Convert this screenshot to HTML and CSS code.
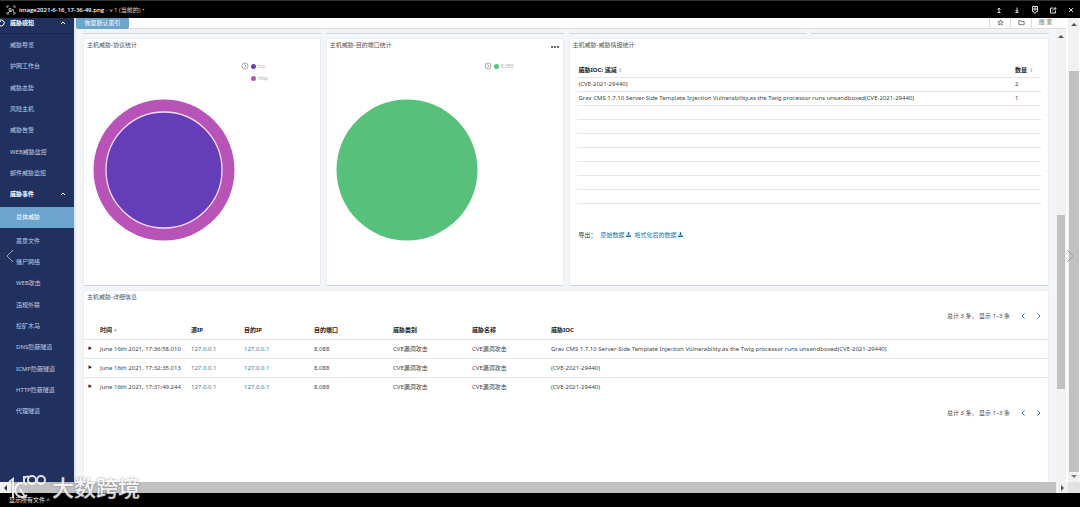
FILE: index.html
```html
<!DOCTYPE html>
<html lang="zh-CN">
<head>
<meta charset="utf-8">
<title>威胁事件 - 总体威胁</title>
<link rel="stylesheet" href="styles.css">
</head>
<body>
<header class="topbar">
  <svg class="file-icon" viewBox="0 0 10 10"><path d="M1 3V1h2M7 1h2v2M9 7v2H7M3 9H1V7M3 3.500h2v2H3zM2 8l2-2 1 1 2-3 1 4"/></svg>
  <span class="file-name">image2021-6-16_17-36-49.png</span>
  <span class="file-version">- v 1 (当前的) •</span>
  <nav class="top-actions">
    <button aria-label="上传"><svg viewBox="0 0 8 8"><path d="M4 6V2M2.500 3.500L4 2l1.500 1.500M2.500 6.500h3"/></svg></button>
    <button aria-label="下载"><svg viewBox="0 0 8 8"><path d="M4 1.500v4M2.500 4L4 5.500 5.500 4M2.500 6.500h3"/></svg></button>
    <button aria-label="评论"><svg viewBox="0 0 8 8"><path d="M1.500 .5h5v5h-1L4 7.500 2.500 5.500h-1zM3 2h2v2H3z"/></svg></button>
    <button aria-label="分享"><svg viewBox="0 0 8 8"><path d="M4 2H1.500v5h5V4.500M3.500 4.500C4 3 5 2.500 7 2.500M5.500 1L7 2.500 5.500 4"/></svg></button>
    <button aria-label="关闭"><svg viewBox="0 0 8 8"><path d="M2 2l4 4M6 2L2 6"/></svg></button>
  </nav>
</header>

<main class="viewer">
  <aside class="sidebar">
    <ul class="menu">
      <li class="group"><svg class="radar" viewBox="0 0 8 8"><path d="M1 2a3 3 0 1 1 0 4M1 .5V2.500h2"/></svg><a href="#">威胁感知</a><svg class="caret" viewBox="0 0 6 6"><path d="M1 4l2-2 2 2"/></svg></li>
      <li><a href="#">威胁导览</a></li>
      <li><a href="#">护网工作台</a></li>
      <li><a href="#">威胁态势</a></li>
      <li><a href="#">风险主机</a></li>
      <li><a href="#">威胁告警</a></li>
      <li><a href="#">WEB威胁监控</a></li>
      <li><a href="#">邮件威胁监控</a></li>
      <li class="group"><a href="#">威胁事件</a><svg class="caret" viewBox="0 0 6 6"><path d="M1 4l2-2 2 2"/></svg></li>
      <li class="sub active"><a href="#">总体威胁</a></li>
      <li class="sub"><a href="#">恶意文件</a></li>
      <li class="sub"><a href="#">僵尸网络</a></li>
      <li class="sub"><a href="#">WEB攻击</a></li>
      <li class="sub"><a href="#">违规外联</a></li>
      <li class="sub"><a href="#">挖矿木马</a></li>
      <li class="sub"><a href="#">DNS隐蔽隧道</a></li>
      <li class="sub"><a href="#">ICMP隐蔽隧道</a></li>
      <li class="sub"><a href="#">HTTP隐蔽隧道</a></li>
      <li class="sub"><a href="#">代理隧道</a></li>
    </ul>
  </aside>

  <section class="content">
    <div class="toolbar">
      <button class="primary">恢复默认索引</button>
      <div class="tools">
        <button aria-label="收藏"><svg viewBox="0 0 8 8"><path d="M4 1l.9 2 2.100.2-1.600 1.500.5 2.200L4 5.800 2.100 6.900l.5-2.200L1 3.200 3.100 3z"/></svg></button>
        <button aria-label="打开"><svg viewBox="0 0 8 8"><path d="M1 2h2.500l.7 1H7v3.500H1z"/></svg></button>
        <button class="search">搜 索</button>
      </div>
    </div>
    <div class="scroller">
      <div class="dashboard">
        <div class="stub"></div><div class="stub"></div><div class="stub"></div><div class="stub"></div>

        <article class="panel">
          <h2>主机威胁-协议统计</h2>
          <div class="chart">
            <svg class="pie" viewBox="0 0 142 142"><circle cx="71" cy="71" r="70.500" fill="#b853b8"/><circle cx="71" cy="71" r="58" fill="#663db8" stroke="#f3dcfa" stroke-width="1.300"/></svg>
            <div class="legend">
              <svg class="toggle" viewBox="0 0 8 8"><circle cx="4" cy="4" r="3"/><path d="M3.400 2.500L5 4 3.400 5.500"/></svg>
              <ul><li><i class="dot violet"></i>tcp</li><li><i class="dot pink"></i>http</li></ul>
            </div>
          </div>
        </article>

        <article class="panel">
          <h2>主机威胁-目的端口统计</h2>
          <button class="more" aria-label="选项"><i></i><i></i><i></i></button>
          <div class="chart">
            <svg class="pie" viewBox="0 0 142 142"><circle cx="71" cy="71" r="70.500" fill="#57c17b"/></svg>
            <div class="legend">
              <svg class="toggle" viewBox="0 0 8 8"><circle cx="4" cy="4" r="3"/><path d="M3.400 2.500L5 4 3.400 5.500"/></svg>
              <ul><li><i class="dot green"></i>8,088</li></ul>
            </div>
          </div>
        </article>

        <article class="panel wide">
          <h2>主机威胁-威胁情报统计</h2>
          <table class="summary">
            <thead><tr><th>威胁IOC: 递减 <span class="sort">⇕</span></th><th class="count">数量 <span class="sort">⇕</span></th></tr></thead>
            <tbody>
              <tr><td>(CVE-2021-29440)</td><td>2</td></tr>
              <tr><td>Grav CMS 1.7.10 Server-Side Template Injection Vulnerability,as the Twig processor runs unsandboxed(CVE-2021-29440)</td><td>1</td></tr>
              <tr><td></td><td></td></tr><tr><td></td><td></td></tr><tr><td></td><td></td></tr><tr><td></td><td></td></tr><tr><td></td><td></td></tr><tr><td></td><td></td></tr><tr><td></td><td></td></tr>
            </tbody>
          </table>
          <p class="export"><span>导出：</span><a href="#">原始数据<svg viewBox="0 0 6 6"><path d="M2.300 0h1.400v2H5L3 4 1 2h1.300zM0 4.300h6V6H0z"/></svg></a><a href="#">格式化后的数据<svg viewBox="0 0 6 6"><path d="M2.300 0h1.400v2H5L3 4 1 2h1.300zM0 4.300h6V6H0z"/></svg></a></p>
        </article>

        <article class="panel full">
          <h2>主机威胁-详细信息</h2>
          <div class="pager"><span>总计 3 条， 显示 1–3 条</span><button aria-label="上一页"><svg viewBox="0 0 6 8"><path d="M4.500 1.500L2 4l2.500 2.500"/></svg></button><button aria-label="下一页"><svg viewBox="0 0 6 8"><path d="M1.500 1.500L4 4 1.500 6.500"/></svg></button></div>
          <table class="detail">
            <colgroup><col class="c-open"><col class="c-time"><col class="c-src"><col class="c-dst"><col class="c-std"><col class="c-std"><col class="c-std"><col></colgroup>
            <thead><tr><th></th><th>时间 <span class="sort">▾</span></th><th>源IP</th><th>目的IP</th><th>目的端口</th><th>威胁类别</th><th>威胁名称</th><th>威胁IOC</th></tr></thead>
            <tbody>
              <tr><td class="open">▶</td><td>June 16th 2021, 17:36:58.010</td><td><a href="#">127.0.0.1</a></td><td><a href="#">127.0.0.1</a></td><td>8,088</td><td>CVE漏洞攻击</td><td>CVE漏洞攻击</td><td>Grav CMS 1.7.10 Server-Side Template Injection Vulnerability,as the Twig processor runs unsandboxed(CVE-2021-29440)</td></tr>
              <tr><td class="open">▶</td><td>June 16th 2021, 17:32:35.013</td><td><a href="#">127.0.0.1</a></td><td><a href="#">127.0.0.1</a></td><td>8,088</td><td>CVE漏洞攻击</td><td>CVE漏洞攻击</td><td>(CVE-2021-29440)</td></tr>
              <tr><td class="open">▶</td><td>June 16th 2021, 17:31:49.244</td><td><a href="#">127.0.0.1</a></td><td><a href="#">127.0.0.1</a></td><td>8,088</td><td>CVE漏洞攻击</td><td>CVE漏洞攻击</td><td>(CVE-2021-29440)</td></tr>
            </tbody>
          </table>
          <div class="pager bottom"><span>总计 3 条， 显示 1–3 条</span><button aria-label="上一页"><svg viewBox="0 0 6 8"><path d="M4.500 1.500L2 4l2.500 2.500"/></svg></button><button aria-label="下一页"><svg viewBox="0 0 6 8"><path d="M1.500 1.500L4 4 1.500 6.500"/></svg></button></div>
        </article>
      </div>
      <div class="vbar inner"><i class="up"></i><b></b></div>
    </div>
  </section>

  <div class="vbar outer"><i class="up"></i><b></b><i class="down"></i></div>
  <button class="step prev" aria-label="上一张"><svg viewBox="0 0 8 14"><path d="M7 1L1 7l6 6"/></svg></button>
  <button class="step next" aria-label="下一张"><svg viewBox="0 0 8 14"><path d="M1 1l6 6-6 6"/></svg></button>
</main>

<div class="hbar"><i class="left"></i><b></b><i class="right"></i><span></span></div>
<footer class="bottombar"><button>显示所有文件 ^</button></footer>

<div class="watermark">
  <svg viewBox="0 0 38 28"><path d="M1 9l4-3v19"/><path d="M19 12a7 7 0 1 0 0 10M12 16l6 9"/><path d="M16 11V3M16 6c1-2 3-3 5-2"/><circle cx="24" cy="7" r="4"/><circle cx="33" cy="7" r="4"/></svg>
  <span>大数跨境</span>
</div>
</body>
</html>
```

FILE: styles.css
```css
* { box-sizing: border-box; }
body {
  margin: 0;
  height: 100vh;
  display: flex;
  flex-direction: column;
  overflow: hidden;
  background: #000;
  color: #444;
  font: 6px/8px "Noto Sans", "Noto Sans CJK SC", sans-serif;
}
button { border: 0; padding: 0; margin: 0; background: none; color: inherit; font: inherit; display: flex; align-items: center; justify-content: center; }
a { color: inherit; text-decoration: none; }
ul { list-style: none; margin: 0; padding: 0; }
svg { fill: none; stroke: currentColor; flex: none; display: block; }

.topbar { flex: none; height: 18px; padding: 0 4px 0 6px; display: flex; align-items: center; color: #ddd; border-top: 1px solid #333; font-family: "Open Sans", "Noto Sans CJK SC", sans-serif; }
.file-icon { width: 10px; height: 10px; margin-right: 3px; stroke-width: 1; color: #aaa; }
.file-name { font-weight: 600; color: #fff; }
.file-version { margin-left: 2px; }
.top-actions { margin-left: auto; display: flex; gap: 8px; }
.top-actions button { width: 10px; height: 10px; }
.top-actions svg { width: 8px; height: 8px; }

.viewer { flex: 1; min-height: 0; display: flex; position: relative; background: #fff; }
.sidebar { flex: none; width: 74px; display: flex; background: #20315f; color: #c3cbe0; overflow: hidden; }
.menu { flex: 1; display: flex; flex-direction: column; margin-top: -6px; padding-bottom: 60px; }
.menu li { flex: 1; display: flex; align-items: center; padding-left: 10px; white-space: nowrap; }
.menu .group { color: #fff; font-weight: 700; position: relative; }
.menu .group:first-child { border-bottom: 1px solid #1a2850; }
.menu .sub { padding-left: 16px; }
.menu .active { background: #6ba4cd; background-clip: padding-box; color: #fff; border: solid transparent; border-width: 2px 0; }
.caret { width: 6px; height: 6px; margin: 0 8px 0 auto; }
.radar { width: 8px; height: 8px; position: absolute; left: -2px; }

.content { flex: 1; min-width: 0; display: flex; flex-direction: column; background: #f3f5f8; border-left: 2px solid #e4e7ee; }
.toolbar { flex: none; height: 11px; display: flex; justify-content: space-between; background: #fff; border-bottom: 1px solid #ddd; }
.primary { width: 53px; height: 11px; padding-bottom: 2px; background: #6ba4cd; color: #fff; border-radius: 0 0 2px 2px; }
.tools { display: flex; margin-right: 7px; color: #666; }
.tools button { width: 21px; padding-bottom: 2px; border-left: 1px solid #ddd; }
.tools svg { width: 7px; height: 7px; stroke-width: 1; }
.tools .search { width: 28px; }
.scroller { flex: 1; min-height: 0; display: flex; }
.dashboard { flex: 1; min-width: 0; display: grid; grid-template-columns: repeat(4, 1fr); grid-template-rows: 5px 248px 1fr; gap: 4px 5px; padding-left: 7px; margin-right: 7px; }
.stub { background: #f0f2f5; border-bottom: 1px solid #cfd6df; }
.panel { min-width: 0; background: #fff; position: relative; border: 1px solid #e9edf0; border-bottom-color: #ccd6dc; border-radius: 2px; }
.wide { grid-column: span 2; }
.full { grid-column: span 4; border-bottom: 0; }
.panel h2 { margin: 0; padding: 2px 3px 0; font-size: 6px; line-height: 8px; font-weight: 400; color: #555; }
.more { position: absolute; top: 7px; right: 4px; gap: 1px; }
.more i { width: 2px; height: 2px; border-radius: 1px; background: #333; }

.chart { display: flex; padding: 13px 0 0 9px; gap: 6px; }
.pie { width: 142px; height: 142px; margin-top: 37px; stroke: none; }
.legend { display: flex; gap: 2px; color: #b4b4b4; font-size: 5px; }
.legend li { display: flex; align-items: center; gap: 2px; height: 8px; margin-bottom: 4px; }
.toggle { width: 8px; height: 8px; color: #aaa; stroke-width: 1; }
.dot { width: 5px; height: 5px; border-radius: 50%; }
.violet { background: #663db8; }
.pink { background: #b853b8; }
.green { background: #57c17b; }

table { border-collapse: collapse; table-layout: fixed; }
th, td { padding: 0; text-align: left; white-space: nowrap; }
th { color: #222; font-weight: 700; }
.sort { color: #999; font-weight: 400; font-size: 5px; }
.summary { width: calc(100% - 14px); margin: 14px 7px 0; }
.summary tr { height: 14px; border-bottom: 1px solid #e6e6e6; }
.summary th, .summary td { padding-left: 2px; }
.summary .count { width: 28px; }
.export { margin: 27px 9px 0; display: flex; gap: 4px; color: #333; }
.export a { display: flex; align-items: center; gap: 1px; color: #1f6fa8; }
.export svg { width: 5px; height: 5px; fill: currentColor; stroke: none; }

.pager { display: flex; justify-content: flex-end; align-items: center; gap: 10px; margin: 11px 6px 0 0; }
.pager button { width: 6px; height: 8px; color: #3b7f96; }
.pager svg { width: 6px; height: 8px; }
.bottom { margin-top: 13px; }
.detail { width: 100%; margin-top: 2px; }
.detail tr { height: 19px; border-bottom: 1px solid #e6e6e6; }
.detail thead tr { height: 17px; }
.detail tbody tr:last-child { border-bottom: 0; }
.detail a { color: #3c7896; }
.detail .open { padding-left: 4px; font-size: 4px; color: #222; }
.c-open { width: 16px; }
.c-time { width: 91px; }
.c-src { width: 53px; }
.c-dst { width: 70px; }
.c-std { width: 79px; }

.vbar { flex: none; width: 10px; display: flex; flex-direction: column; align-items: center; background: #f1f1f1; }
.vbar b, .hbar b { background: #c1c1c1; }
.vbar i, .hbar i { border: 3px solid transparent; flex: none; }
.vbar .up { border-bottom-color: #555; border-top: 0; }
.vbar .down { border-top-color: #777; border-bottom: 0; }
.inner { padding-top: 6px; }
.inner b { width: 8px; height: 39%; margin-top: 177px; }
.outer { width: 11px; margin: 0 1px 0 2px; padding: 5px 0 4px; }
.outer b { width: 10px; flex: 1; margin: 45px 0 3px; }
.step { position: absolute; top: 231px; color: #9aa0ac; }
.step svg { width: 8px; height: 14px; }
.prev { left: 6px; }
.next { right: 6px; }

.hbar { flex: none; height: 11px; display: flex; align-items: center; background: #f1f1f1; }
.hbar b { flex: 1; height: 11px; }
.hbar .left { border-right-color: #333; border-left: 0; margin: 0 4px; }
.hbar .right { border-left-color: #555; border-right: 0; margin: 0 4px 0 5px; }
.hbar span { width: 12px; height: 11px; background: #e2e2e2; }
.bottombar { flex: none; height: 14px; padding-left: 9px; display: flex; align-items: center; color: #eee; }

.watermark { position: absolute; left: 8px; bottom: 6px; display: flex; align-items: center; gap: 6px; color: #fff; opacity: .85; font-size: 22px; font-weight: 500; line-height: 28px; text-shadow: 0 0 2px #666; pointer-events: none; }
.watermark svg { width: 38px; height: 28px; stroke-width: 2; }
```
